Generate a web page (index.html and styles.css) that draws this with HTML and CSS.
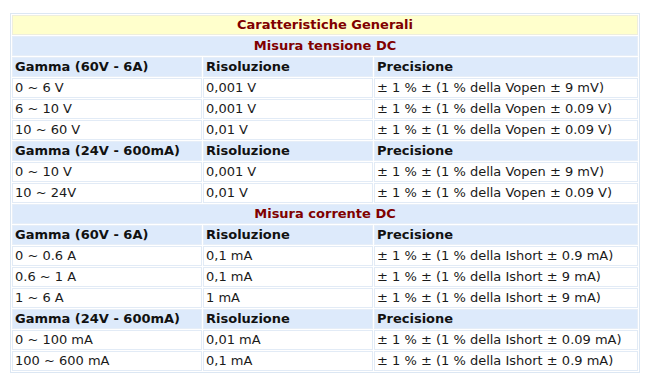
FILE: index.html
```html
<!DOCTYPE html>
<html lang="it">
<head>
<meta charset="utf-8">
<link rel="stylesheet" href="styles.css">
</head>
<body>
<table class="spec">
  <colgroup><col class="c1"><col class="c2"><col class="c3"></colgroup>
  <tr><td colspan="3" class="title">Caratteristiche Generali</td></tr>
  <tr><td colspan="3" class="section">Misura tensione DC</td></tr>
  <tr class="head"><td>Gamma (60V - 6A)</td><td>Risoluzione</td><td>Precisione</td></tr>
  <tr><td>0 ~ 6 V</td><td>0,001 V</td><td>± 1 % ± (1 % della Vopen ± 9 mV)</td></tr>
  <tr><td>6 ~ 10 V</td><td>0,001 V</td><td>± 1 % ± (1 % della Vopen ± 0.09 V)</td></tr>
  <tr><td>10 ~ 60 V</td><td>0,01 V</td><td>± 1 % ± (1 % della Vopen ± 0.09 V)</td></tr>
  <tr class="head"><td>Gamma (24V - 600mA)</td><td>Risoluzione</td><td>Precisione</td></tr>
  <tr><td>0 ~ 10 V</td><td>0,001 V</td><td>± 1 % ± (1 % della Vopen ± 9 mV)</td></tr>
  <tr><td>10 ~ 24V</td><td>0,01 V</td><td>± 1 % ± (1 % della Vopen ± 0.09 V)</td></tr>
  <tr><td colspan="3" class="section">Misura corrente DC</td></tr>
  <tr class="head"><td>Gamma (60V - 6A)</td><td>Risoluzione</td><td>Precisione</td></tr>
  <tr><td>0 ~ 0.6 A</td><td>0,1 mA</td><td>± 1 % ± (1 % della Ishort ± 0.9 mA)</td></tr>
  <tr><td>0.6 ~ 1 A</td><td>0,1 mA</td><td>± 1 % ± (1 % della Ishort ± 9 mA)</td></tr>
  <tr><td>1 ~ 6 A</td><td>1 mA</td><td>± 1 % ± (1 % della Ishort ± 9 mA)</td></tr>
  <tr class="head"><td>Gamma (24V - 600mA)</td><td>Risoluzione</td><td>Precisione</td></tr>
  <tr><td>0 ~ 100 mA</td><td>0,01 mA</td><td>± 1 % ± (1 % della Ishort ± 0.09 mA)</td></tr>
  <tr><td>100 ~ 600 mA</td><td>0,1 mA</td><td>± 1 % ± (1 % della Ishort ± 0.9 mA)</td></tr>
</table>
</body>
</html>
```
FILE: styles.css
```css
html, body { margin: 0; padding: 0; background: #fff; }
body { padding: 13px 10px 0 10px; }
.spec {
  width: 630px;
  table-layout: fixed;
  border-collapse: separate;
  border-spacing: 1px;
  border: 1px solid #dce7f3;
  font-family: "DejaVu Sans", Verdana, sans-serif;
  font-size: 13px;
  color: #1a1a1a;
}
.c1 { width: 190px; }
.c2 { width: 170px; }
.spec td {
  border: 1px solid #e2ebf6;
  padding: 1px 2px;
  height: 16px;
  line-height: 16px;
  white-space: nowrap;
  background: #fff;
}
.spec td.title {
  background: #ffffcc;
  border-color: #eeeedd;
  color: #800000;
  font-weight: bold;
  text-align: center;
}
.spec td.section {
  background: #ddeafb;
  border-color: #e6eef8;
  color: #800000;
  font-weight: bold;
  text-align: center;
}
.spec tr.head td {
  background: #ddeafb;
  border-color: #e6eef8;
  color: #111;
  font-weight: bold;
}
```
